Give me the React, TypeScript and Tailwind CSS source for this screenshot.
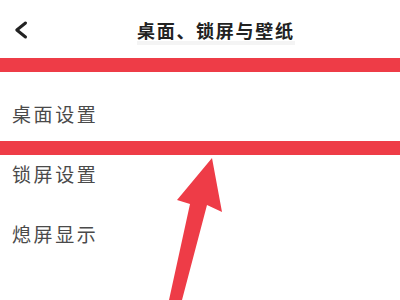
import React from "react";

export default function App() {
  return (
    <div
      className="relative w-[400px] h-[300px] overflow-hidden bg-white"
      style={{ fontFamily: '"Noto Sans CJK SC", "Noto Sans", sans-serif' }}
    >
      <div className="flex items-start h-[56px]">
        <svg width="40" height="56" viewBox="0 0 40 56" fill="none" className="shrink-0">
          <path d="M25.5 23 L16.8 30 L25.5 37" stroke="#222" strokeWidth="3" strokeLinecap="round" strokeLinejoin="round" />
        </svg>
        <div className="flex flex-col pl-[97px] pt-[21px]">
          <span className="text-[18px] font-bold text-[#222] tracking-[1.7px] leading-[18px] whitespace-nowrap">桌面、锁屏与壁纸</span>
          <div className="mt-[2px] h-[4px] w-[158px] bg-[#f4f4f4]" />
        </div>
      </div>

      <div className="flex flex-col pt-[27px]">
        {["桌面设置", "锁屏设置", "熄屏显示"].map((t) => (
          <div key={t} className="h-[60px] flex items-center pl-[12px]">
            <span className="text-[19px] text-[#4a4a4a] tracking-[2.6px] leading-none">{t}</span>
          </div>
        ))}
      </div>

      <div className="absolute left-0 top-[58px] w-full h-[14px] bg-[#ee3c47]" />
      <div className="absolute left-0 top-[141px] w-full h-[14px] bg-[#ee3c47]" />

      <svg className="absolute left-0 top-0" width="400" height="300" viewBox="0 0 400 300">
        <polygon
          points="212,158 222,212 207,205 182,300 169,300 190,204 177,200"
          fill="#ee3c47"
        />
      </svg>
    </div>
  );
}
